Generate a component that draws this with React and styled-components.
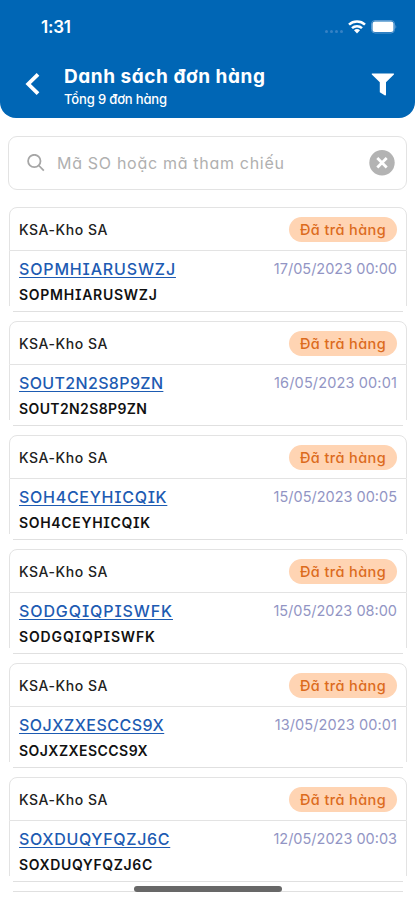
import React from 'react';
import styled, { createGlobalStyle } from 'styled-components';

const orders = [
    { code: 'SOPMHIARUSWZJ', date: '17/05/2023 00:00', big: 0.84, small: 0.73, dateSpacing: 0 },
    { code: 'SOUT2N2S8P9ZN', date: '16/05/2023 00:01', big: 0.35, small: 0.38, dateSpacing: 0.14 },
    { code: 'SOH4CEYHICQIK', date: '15/05/2023 00:05', big: 0.72, small: 0.68, dateSpacing: 0 },
    { code: 'SODGQIQPISWFK', date: '15/05/2023 08:00', big: 0.9, small: 0.86, dateSpacing: 0 },
    { code: 'SOJXZXESCCS9X', date: '13/05/2023 00:01', big: 0.48, small: 0.46, dateSpacing: 0.1 },
    { code: 'SOXDUQYFQZJ6C', date: '12/05/2023 00:03', big: 0.68, small: 0.64, dateSpacing: 0 },
];

export default function App() {
    return (
        <Screen>
            <GlobalStyle />
            <Header>
                <StatusBar>
                    <Clock>1:31</Clock>
                    <StatusIcons>
                        <Signal><i /><i /><i /><i /></Signal>
                        <svg width="18" height="14" viewBox="0 0 18 14" fill="none" stroke="#fff" strokeWidth="2.5">
                            <path d="M1 4.7C5.4.5 12.6.5 17 4.7" />
                            <path d="M4 8.2C6.8 5.5 11.2 5.5 14 8.2" />
                            <path d="M6 10.3Q9 7.9 12 10.3L9 13.4Z" fill="#fff" stroke="none" />
                        </svg>
                        <svg width="26" height="14" viewBox="0 0 26 14">
                            <rect x=".5" y=".5" width="23" height="12.5" rx="3.5" fill="none" stroke="#5a99d0" />
                            <rect x="1.5" y="1.5" width="21" height="10.5" rx="2.5" fill="#fff" />
                            <path d="M24.5 4.5q1.4 2.2 0 4.4z" fill="#6fa6d6" />
                        </svg>
                    </StatusIcons>
                </StatusBar>
                <TitleBar>
                    <svg width="16" height="24" viewBox="0 0 16 24" fill="none" stroke="#fff" strokeWidth="3.8">
                        <path d="M13 2.3L3.2 12l9.8 9.7" />
                    </svg>
                    <Titles>
                        <Title>Danh sách đơn hàng</Title>
                        <Subtitle>Tổng 9 đơn hàng</Subtitle>
                    </Titles>
                    <svg width="24" height="24" viewBox="0 0 24 24" fill="#fff">
                        <path d="M1.2 1.5h21.3q1 0 .4 1L15 10.3v12.5q-.4 1-1.4.4L8.8 20.3v-10L.8 2.5Q.3 1.5 1.2 1.5z" />
                    </svg>
                </TitleBar>
            </Header>
            <SearchBox>
                <svg width="18" height="19" viewBox="0 0 18 19" fill="none" stroke="#a6a6a6" strokeWidth="1.8">
                    <circle cx="7.3" cy="7" r="6.2" />
                    <path d="M11.8 11.5l5 5.2" />
                </svg>
                <Placeholder>Mã SO hoặc mã tham chiếu</Placeholder>
                <svg width="26" height="26" viewBox="0 0 26 26">
                    <circle cx="13" cy="12.7" r="12.7" fill="#b3b3b3" />
                    <path d="M8.3 8l9.4 9.4m0-9.4l-9.4 9.4" stroke="#fff" strokeWidth="2.8" />
                </svg>
            </SearchBox>
            <List>
                {
                    orders.map((order) =>
                        <Order key={order.code}>
                            <OrderTop>
                                <Store>KSA-Kho SA</Store>
                                <Status>Đã trả hàng</Status>
                            </OrderTop>
                            <OrderBody>
                                <div>
                                    <Code $spacing={order.big}>{order.code}</Code>
                                    <Reference $spacing={order.small}>{order.code}</Reference>
                                </div>
                                <DateText $spacing={order.dateSpacing}>{order.date}</DateText>
                            </OrderBody>
                            <BottomLine />
                        </Order>
                    )
                }
                <BottomLine />
            </List>
            <HomeBar />
        </Screen>
    );
}

const GlobalStyle = createGlobalStyle`
    *{
        box-sizing:border-box;
    }
    body{
        margin:0;
        background:#fff;
        font-family:Inter,'Noto Sans',sans-serif;
        font-feature-settings:'cv08','cv11';
    }
    svg{
        display:block;
        flex:none;
    }
`
const Screen = styled.div`
    position:relative;
    width:415px;
    height:900px;
    overflow:hidden;
    background:#fff;
    white-space:nowrap;
`
const Header = styled.header`
    height:118px;
    background:#0066b5;
    border-radius:0 0 16px 16px;
`
const StatusBar = styled.div`
    height:54px;
    padding:0 18px 0 41px;
    display:flex;
    justify-content:space-between;
    align-items:center;
`
const Clock = styled.div`
    color:#fff;
    font-size:17px;
    line-height:20px;
    font-weight:600;
    letter-spacing:-0.2px;
`
const StatusIcons = styled.div`
    display:flex;
    align-items:center;
    gap:5px;
`
const Signal = styled.div`
    display:flex;
    gap:2px;
    padding-top:8px;
    i{
        width:3px;
        height:3px;
        border-radius:50%;
        background:#3682c5;
    }
`
const TitleBar = styled.div`
    height:60px;
    padding:0 20px 0 25px;
    display:flex;
    align-items:center;
`
const Titles = styled.div`
    flex:1;
    margin-left:23px;
    padding-top:5px;
    color:#fff;
`
const Title = styled.h1`
    margin:0;
    font-size:19px;
    line-height:25px;
    font-weight:700;
    letter-spacing:0.55px;
`
const Subtitle = styled.div`
    font-size:13px;
    line-height:21px;
    font-weight:500;
    letter-spacing:-0.15px;
`
const SearchBox = styled.div`
    height:54px;
    margin:18px 8px 0;
    padding:0 11px 0 18px;
    display:flex;
    align-items:center;
    border:1.5px solid #e3e3e3;
    border-radius:9px;
`
const Placeholder = styled.div`
    flex:1;
    margin-left:12px;
    color:#b0b0b0;
    font-size:16px;
    letter-spacing:0.7px;
`
const List = styled.div`
    padding:17px 8px 0 9px;
`
const Order = styled.div`
    height:105px;
    margin-bottom:9px;
    display:flex;
    flex-direction:column;
`
const OrderTop = styled.div`
    height:44px;
    padding:0 9px;
    display:flex;
    justify-content:space-between;
    align-items:center;
    border:1.5px solid #e3e3e3;
    border-radius:8px 8px 0 0;
`
const Store = styled.div`
    color:#222;
    font-size:14px;
    font-weight:500;
    letter-spacing:0.55px;
`
const Status = styled.div`
    width:108px;
    height:25px;
    border-radius:13px;
    background:#ffd4b3;
    color:#dc6b1d;
    font-size:14.5px;
    font-weight:500;
    display:flex;
    justify-content:center;
    align-items:center;
    letter-spacing:0.4px;
`
const OrderBody = styled.div`
    height:55px;
    padding:8px 9px 0;
    display:flex;
    justify-content:space-between;
    border:solid #e3e3e3;
    border-width:0 1.5px;
`
const Code = styled.div`
    width:max-content;
    color:#1d5bb2;
    font-size:16px;
    line-height:20px;
    font-weight:500;
    letter-spacing:${props => props.$spacing}px;
    text-decoration:underline;
    text-decoration-thickness:1px;
    text-underline-offset:2px;
    text-decoration-skip-ink:none;
`
const Reference = styled.div`
    width:max-content;
    margin-top:6px;
    color:#111;
    font-size:14px;
    line-height:19px;
    font-weight:600;
    letter-spacing:${props => props.$spacing}px;
`
const DateText = styled.div`
    color:#9295c4;
    font-size:14.5px;
    line-height:20px;
    letter-spacing:${props => props.$spacing}px;
`
const BottomLine = styled.div`
    height:1px;
    margin:5px 4px 0;
    background:#e0e0e0;
    ${List} > &{
        margin-top:0;
    }
`
const HomeBar = styled.div`
    position:absolute;
    left:134px;
    top:886px;
    width:148px;
    height:6px;
    border-radius:3px;
    background:#686868;
`
